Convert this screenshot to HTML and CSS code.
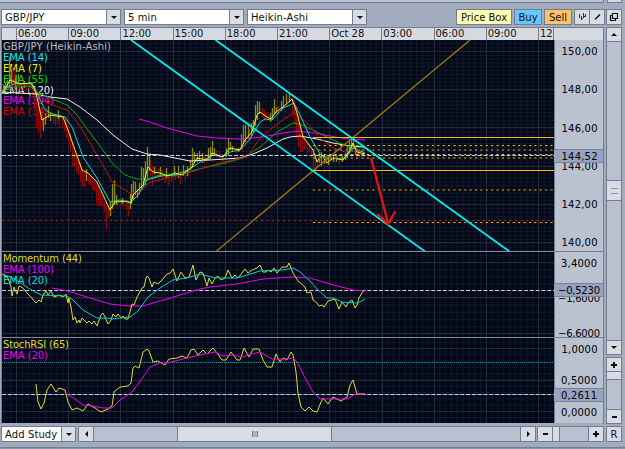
FILE: index.html
```
<!DOCTYPE html>
<html lang="en">
<head>
    <meta charset="UTF-8">
    <title>GBP/JPY</title>
    <link rel="stylesheet" href="styles.css">
</head>
<body>
    <div class="top-edge"><div class="edge-main"></div><div class="edge-side"></div></div>

    <div class="toolbar">
        <div class="select"><span>GBP/JPY</span><i class="drop"></i></div>
        <div class="select"><span>5 min</span><i class="drop"></i></div>
        <div class="select"><span>Heikin-Ashi</span><i class="drop"></i></div>
        <div class="actions">
            <div class="btn price">Price Box</div>
            <div class="btn buy">Buy</div>
            <div class="btn sell">Sell</div>
            <div class="tools">
                <div class="btn tool">
                    <svg width="13" height="14" viewBox="0 0 13 14"><path d="M3.5 4v4M5.5 6v4M7.5 3v5M9.5 4v3M3 5.5h1M5 8.5h2M7 6.5h2" stroke="#333" fill="none"/></svg>
                </div>
                <div class="btn tool">
                    <svg width="13" height="14" viewBox="0 0 13 14"><path d="M4 9.5l5-5" stroke="#111" stroke-width="1.4"/></svg>
                </div>
            </div>
            <div class="btn window">
                <svg width="14" height="14" viewBox="0 0 14 14"><path d="M5.5 3.5h5v5h-5zM5 5.5H3.500v5h5V9" stroke="#111" fill="none" stroke-width="1.2"/></svg>
            </div>
        </div>
    </div>

    <div class="main">
        <div class="chart">
            <div class="timeline">
                <span class="first"></span>
                <span>06:00</span><span>09:00</span><span>12:00</span><span>15:00</span><span>18:00</span>
                <span>21:00</span><span>Oct 28</span><span>03:00</span><span>06:00</span><span>09:00</span>
                <span class="last">12</span>
                <span class="corner"></span>
            </div>
            <div class="plots">
                <svg class="plot" width="552" height="383" viewBox="2 40 552 383">
                    <defs>
                        <pattern id="minorV" x="16" width="5.8" height="400" patternUnits="userSpaceOnUse"><path class="minor" d="M.5 0V400"/></pattern>
                        <pattern id="minorA" y="51" width="600" height="3.83" patternUnits="userSpaceOnUse"><path class="minor" d="M0 .5H600"/></pattern>
                        <pattern id="minorB" y="262" width="600" height="7.1" patternUnits="userSpaceOnUse"><path class="minor" d="M0 .5H600"/></pattern>
                        <pattern id="minorC" y="348" width="600" height="6.3" patternUnits="userSpaceOnUse"><path class="minor" d="M0 .5H600"/></pattern>
                        <clipPath id="price"><path d="M2 40H554V251H2z"/></clipPath>
                    </defs>

                    <!-- grid -->
                    <path fill="url(#minorA)" d="M2 40H554V251H2z"/>
                    <path fill="url(#minorB)" d="M2 252H554V337H2z"/>
                    <path fill="url(#minorC)" d="M2 338H554V423H2z"/>
                    <path fill="url(#minorV)" d="M2 40H554V423H2z"/>
                    <path class="major" d="M16.500 40V423M68.500 40V423M120.500 40V423M173.500 40V423M225.500 40V423M277.500 40V423M329.500 40V423M382.500 40V423M434.500 40V423M486.500 40V423M538.500 40V423"/>
                    <path class="major" d="M2 51.500H554M2 89.500H554M2 127.500H554M2 166.500H554M2 204.500H554M2 242.500H554M2 262.500H554M2 297.500H554M2 333.500H554M2 348.500H554M2 380.500H554M2 411.500H554"/>
                    <path class="divider" d="M2 251.500H554M2 337.500H554"/>

                    <!-- labels -->
                    <g class="labels">
                        <text x="3" y="50" textLength="108" fill="#b9bcc2">GBP/JPY (Heikin-Ashi)</text>
                        <text x="3" y="60.500" textLength="45" fill="#0ee">EMA (14)</text>
                        <text x="3" y="71.500" textLength="39" fill="#ee0">EMA (7)</text>
                        <text x="3" y="82.500" textLength="45" fill="#0d0">EMA (55)</text>
                        <text x="3" y="93.500" textLength="51" fill="#eee">EMA (120)</text>
                        <text x="3" y="104" textLength="51" fill="#e0e">EMA (204)</text>
                        <text x="3" y="115" textLength="45" fill="#d00">EMA (34)</text>
                        <text x="3" y="262" textLength="79" fill="#dd2">Momentum (44)</text>
                        <text x="3" y="273" textLength="51" fill="#e0e">EMA (100)</text>
                        <text x="3" y="283.500" textLength="45" fill="#0dd">EMA (20)</text>
                        <text x="3" y="348" textLength="66" fill="#dd2">StochRSI (65)</text>
                        <text x="3" y="358.500" textLength="45" fill="#e0e">EMA (20)</text>
                    </g>

                    <!-- price -->
                    <g clip-path="url(#price)" fill="none">
                        <path class="down" d="M12.500 66V85M14.500 72V92M17.500 84V93M20.500 85V94M23.500 86V91M26.500 85V92M29.500 84V92M32.500 85V95M34.500 88V107M36.500 94V128M38.500 100V133M40.500 108V138M42.500 114V129M46.500 112V121M53.500 113V124M55.500 116V126M57.500 116V124M59.500 117V127M62.500 116V127M64.500 117V131M66.500 120V138M68.500 126V143M70.500 133V152M72.500 142V167M74.500 151V166M76.500 153V172M78.500 159V175M80.500 162V182M82.500 169V187M84.500 172V187M88.500 174V184M90.500 176V185M92.500 177V190M94.500 180V191M96.500 183V205M98.500 186V206M100.500 192V206M102.500 196V207M104.500 201V212M106.500 205V230M108.500 208V218M117.500 199V207M120.500 200V206M123.500 199V207M126.500 202V210M128.500 204V216M150.500 160V176M152.500 166V186M155.500 168V179M158.500 168V180M162.500 170V180M165.500 172V183M168.500 173V185M171.500 171V182M175.500 171V180M180.500 170V184M185.500 169V180M188.500 168V177M204.500 156V164M216.500 150V157M219.500 151V160M222.500 154V162M236.500 148V154M242.500 144V152M249.500 130V140M262.500 108V117M264.500 110V121M266.500 112V121M268.500 115V120M278.500 106V115M286.500 98V107M292.500 94V116M294.500 100V125M296.500 107V139M298.500 118V147M300.500 125V152M302.500 133V152M304.500 137V150M307.500 140V153M309.500 144V153M311.500 146V158M313.500 150V169M315.500 153V170M317.500 158V168M326.500 155V164M331.500 155V161M339.500 158V165M356.500 148V159M359.500 149V158M361.500 153V158M363.500 149V158"/>
                        <path class="up" d="M3.500 84V94M5.500 82V92M7.500 80V88M9.500 57V88M11.500 70V84M15.500 78V88M18.500 74V84M24.500 81V88M43.500 118V131M45.500 113V125M48.500 106V118M50.500 113V121M58.500 110V119M86.500 169V181M110.500 202V216M112.500 184V209M114.500 180V205M116.500 195V205M122.500 198V204M130.500 194V209M131.500 184V204M133.500 181V200M135.500 182V195M137.500 189V198M139.500 183V194M141.500 167V190M143.500 168V187M145.500 161V185M147.500 147V178M149.500 154V171M154.500 167V174M160.500 167V177M166.500 168V178M174.500 166V176M178.500 166V178M183.500 165V176M187.500 166V176M190.500 160V170M192.500 148V167M194.500 152V163M197.500 153V162M199.500 151V160M202.500 153V163M208.500 148V160M210.500 147V160M212.500 141V156M214.500 148V156M226.500 148V157M228.500 139V155M230.500 142V150M232.500 146V151M238.500 148V152M241.500 134V149M243.500 125V144M245.500 125V142M248.500 125V138M251.500 123V136M253.500 120V132M255.500 105V126M257.500 101V120M259.500 102V114M270.500 113V122M272.500 108V119M274.500 99V114M276.500 107V113M281.500 101V111M283.500 96V108M286.500 94V103M289.500 93V102M319.500 155V163M321.500 152V166M324.500 154V164M328.500 156V165M333.500 155V162M336.500 156V162M342.500 156V162M345.500 153V160M347.500 146V158M349.500 141V154M351.500 139V151M353.500 138V149M355.500 146V155M358.500 150V156"/>
                        <path stroke="#eee" d="M2 92L35 94 50 97 67 99 80 107 97 120 113 135 132 149 147 154 160 155 170 157 190 161 210 160 240 158 253 154 267 148 283 139 290 137 300 136 317 139 333 143 350 146 365 147"/>
                        <path stroke="#0a0" d="M2 91L15 87 30 86 37 92 50 98 67 105 77 115 87 129 100 146 112 163 125 175 137 179 147 179 160 175 180 174 195 170 208 167 225 163 243 158 260 147 277 132 293 123 300 124 313 130 333 140 347 146 365 148"/>
                        <path stroke="#c01010" d="M2 90L15 85 30 85 37 92 47 103 67 110 80 126 97 155 112 182 130 193 140 192 150 182 160 180 175 176 195 171 203 168 223 162 247 157 260 138 273 127 293 113 297 115 307 123 320 138 333 148 345 152 365 151"/>
                        <path stroke="#e0e" d="M139 119L150 122 167 128 197 136 217 138 240 139 263 137 283 133 297 131 315 133 335 137 350 139 365 140"/>
                        <path stroke="#0dd" d="M2 91L13 84 32 83 38 95 45 110 53 114 65 117 72 127 78 143 83 157 97 178 110 202 120 200 130 203 138 195 147 180 160 176 175 175 190 169 200 162 213 155 222 157 230 152 240 150 250 139 260 122 265 119 272 120 283 108 294 103 300 115 310 137 320 154 330 159 345 158 353 148 365 153"/>
                        <path stroke="#ee2" d="M2 94L10 80 20 84 31 83 36 93 42 120 50 115 63 117 68 130 75 150 82 170 88 173 97 182 110 210 115 202 127 201 131 203 133 195 143 185 148 167 153 172 160 173 168 176 175 173 182 175 192 167 197 158 207 160 212 153 223 157 230 148 240 150 245 140 252 132 257 115 260 112 267 117 271 119 276 112 283 107 292 99 297 113 303 137 313 150 317 162 322 155 327 163 333 158 343 160 350 150 353 143 357 152 365 154"/>
                        <path stroke="#a47a12" stroke-width="1.2" d="M216 251.500L470 40"/>
                        <path stroke="#fb0" d="M313 137.500H554M313 170.500H554"/>
                        <path class="dots dim" d="M313 150H554M313 158H554M313 190H554"/>
                        <path class="dots" stroke="#fc0" d="M313 145.500H554M313 154.500H554M313 222.500H554"/>
                        <path class="dots" stroke="#e01010" d="M2 220.500H554"/>
                        <path class="dash" d="M2 155.500H554"/>
                        <path class="channel" d="M131 40L425 251.500M215.500 40L509.500 251.500"/>
                        <path stroke="#f01010" stroke-width="2.2" d="M371 158L388 223M377.500 214L388 224 395.500 211"/>
                    </g>

                    <!-- momentum -->
                    <g fill="none">
                        <path class="dash" d="M2 290.500H554"/>
                        <path stroke="#e0e" d="M52 288L68 291 90 298 110 304 130 306 143 306 167 299 200 289 210 287 237 284 263 279 293 277 310 278 330 284 353 290 365 291"/>
                        <path stroke="#dd2" d="M2 274L8 278 11 287 12 296 14 287 17 294 19 286 23 288 27 293 31 297 36 303 39 300 41 302 43 295 46 291 48 295 51 291 54 297 59 295 63 297 66 294 68 303 69 298 71 307 73 320 75 317 77 323 79 320 80 323 82 318 87 323 89 321 92 324 94 321 97 326 101 315 103 313 105 317 108 324 111 320 113 314 116 317 118 314 121 318 123 316 125 319 128 319 131 308 132 304 134 305 137 297 142 288 144 287 146 278 147 276 149 278 152 287 154 282 158 284 162 280 167 274 170 273 173 269 177 281 181 272 185 278 189 277 193 265 196 280 200 272 203 273 207 286 209 278 212 284 215 278 218 276 221 280 225 278 228 270 232 278 235 275 238 278 242 273 245 269 248 273 252 270 257 268 260 265 263 272 266 272 268 270 271 272 274 268 277 273 282 267 287 267 289 263 293 273 298 281 305 287 307 293 311 292 313 300 317 303 319 306 322 305 324 307 328 301 335 299 339 309 342 302 346 307 348 303 352 300 355 308 357 305 359 298 362 293 364 290"/>
                        <path stroke="#0cc" d="M3 274L15 279 28 288 41 295 67 296 73 300 83 310 97 318 107 318 112 319 130 317 138 311 148 297 160 288 173 280 187 278 200 274 215 278 237 278 260 271 283 270 293 268 300 272 310 281 318 290 327 298 333 298 342 302 358 303 365 299"/>
                    </g>

                    <!-- stochastic rsi -->
                    <g fill="none">
                        <path stroke="#0a9898" stroke-dasharray="1 1" d="M2 362.500H554"/>
                        <path stroke="#067" d="M2 394.500H554"/>
                        <path class="dash" d="M2 394.500H554"/>
                        <path stroke="#dd2" d="M36 384L38 402 41 409 44 403 47 390 51 384 56 392 59 388 65 390 68 402 72 410 77 408 83 411 88 404 95 408 101 412 108 409 112 406 114 392 120 387 128 386 131 383 133 368 135 366 139 368 143 352 147 349 149 351 153 362 158 361 165 365 169 359 177 358 182 356 187 358 191 350 194 349 198 355 203 350 207 354 213 348 217 353 222 360 226 360 231 352 237 360 240 360 244 348 249 357 253 349 259 349 263 360 267 367 272 367 276 354 280 362 283 358 287 360 291 352 293 355 296 372 298 393 301 407 305 411 309 407 313 411 317 412 321 402 323 398 328 404 333 397 341 401 347 397 350 385 353 380 357 394 365 394"/>
                        <path stroke="#e0e" d="M65 393L72 397 83 405 93 406 103 408 112 408 120 400 132 392 138 384 150 367 160 363 167 363 183 359 200 355 215 352 223 356 232 355 242 357 248 355 260 352 272 359 287 359 293 358 297 362 305 378 313 392 320 399 347 399 355 394 365 394"/>
                    </g>
                </svg>
                <svg class="axis" width="49" height="383" viewBox="554 40 49 383">
                    <path stroke="#727d92" d="M554.500 40V423"/>
                    <text x="561.500" y="55" textLength="36">150,00</text>
                    <text x="561.500" y="93" textLength="36">148,00</text>
                    <text x="561.500" y="131.500" textLength="36">146,00</text>
                    <text x="561.500" y="170" textLength="36">144,00</text>
                    <text x="561.500" y="208" textLength="36">142,00</text>
                    <text x="561.500" y="246" textLength="36">140,00</text>
                    <text x="561" y="267" textLength="36">3,4000</text>
                    <text x="558" y="302" textLength="42">−1,6000</text>
                    <text x="558" y="337" textLength="42">−6,6000</text>
                    <text x="561.500" y="352.500" textLength="36">1,0000</text>
                    <text x="561" y="384" textLength="36">0,5000</text>
                    <text x="561" y="415.500" textLength="36">0,0000</text>
                    <path stroke="#727d92" d="M554 251.500H603M554 337.500H603"/>
                    <g class="current">
                        <rect x="553.500" y="149.500" width="50" height="13"/>
                        <rect x="553.500" y="283.500" width="50" height="13"/>
                        <rect x="553.500" y="388.500" width="50" height="13"/>
                    </g>
                    <text x="561.500" y="160" textLength="36">144,52</text>
                    <text x="558" y="294" textLength="42">−0,5230</text>
                    <text x="561" y="399" textLength="36">0,2611</text>
                </svg>
            </div>
        </div>

        <div class="side">
            <div class="scroll-v">
                <div class="btn"><i class="tri up-tri"></i></div>
                <div class="track"><div class="thumb-v"></div></div>
                <div class="btn"><i class="tri down-tri"></i></div>
            </div>
            <div class="zoom-v">
                <div class="btn plus"></div>
                <div class="knob-v"></div>
                <div class="track"></div>
                <div class="btn minus"></div>
            </div>
        </div>
    </div>

    <div class="bottom">
        <div class="select study"><span>Add Study</span><i class="drop"></i></div>
        <div class="scroll-h">
            <div class="btn"><i class="tri left-tri"></i></div>
            <div class="track"><div class="thumb-h"></div></div>
            <div class="btn"><i class="tri right-tri"></i></div>
        </div>
        <div class="zoom-h">
            <div class="btn minus"></div>
            <div class="knob-h"></div>
            <div class="track"></div>
            <div class="btn plus"></div>
        </div>
        <div class="btn reset">R</div>
    </div>
    <div class="bottom-edge"></div>
</body>
</html>
```

FILE: styles.css
```
* {
    box-sizing: border-box;
}
body {
    margin: 0;
    width: 625px;
    height: 449px;
    overflow: hidden;
    display: flex;
    flex-direction: column;
    background-color: #a1abbd;
    font-family: "DejaVu Sans", sans-serif;
    font-size: 10px;
    color: #111;
}
.top-edge {
    display: flex;
    gap: 3px;
    height: 3px;
    margin-bottom: 6px;
}
.edge-main {
    width: 604px;
    background: #b9c0ce;
    border-bottom: 1px solid #727d92;
    border-right: 1px solid #727d92;
}
.edge-side {
    width: 15px;
    background: #d6d9e0;
    border: 1px solid #727d92;
    border-top: none;
}

/* toolbar */
.toolbar {
    display: flex;
    gap: 3px;
    height: 16px;
    padding: 0 3px 0 1px;
    margin-bottom: 2px;
}
.select {
    display: flex;
    width: 120px;
    height: 16px;
    background: #fff;
    border: 1px solid #727d92;
    line-height: 15px;
    letter-spacing: 0.1px;
}
.select span {
    flex: 1;
    padding-left: 3px;
    white-space: nowrap;
}
.drop {
    width: 14px;
    background: #d9dce3;
    border-left: 1px solid #727d92;
    display: flex;
    align-items: center;
    justify-content: center;
}
.drop::before {
    content: "";
    border: 3px solid transparent;
    border-top: 3px solid #111;
    border-bottom: none;
}
.actions {
    display: flex;
    gap: 2px;
    margin-left: auto;
}
.btn {
    display: flex;
    align-items: center;
    justify-content: center;
    flex: none;
    background: #d9dce3;
    border: 1px solid #727d92;
}
.price {
    width: 56px;
    background: #ffffb0;
}
.buy {
    width: 28px;
    background: #66c8ff;
}
.sell {
    width: 28px;
    background: #ffc266;
}
.tools {
    display: flex;
    width: 30px;
}
.tool {
    width: 16px;
}
.tool + .tool {
    margin-left: -1px;
}
.window {
    width: 16px;
}

/* chart */
.main {
    display: flex;
    gap: 2px;
    height: 397px;
    margin-bottom: 2px;
    padding-left: 1px;
}
.chart {
    width: 603px;
    border: 1px solid #727d92;
    border-bottom: none;
}
.timeline {
    display: flex;
    height: 12px;
    background: #d6d9e0;
    line-height: 12px;
}
.timeline span {
    width: 52.2px;
    flex: none;
    padding-left: 1px;
    border-left: 1px solid #727d92;
    overflow: hidden;
}
.timeline .first {
    width: 14px;
    border-left: none;
}
.timeline .last {
    width: 15.500px;
}
.timeline .corner {
    flex: 1;
}
.plots {
    display: flex;
    border-top: 1px solid #727d92;
}
.plot,
.axis {
    flex: none;
    margin-top: -1px;
}
.plot {
    background: #020818;
}
.axis {
    background: #bac1cf;
}
.labels text,
.axis text {
    font-size: 10px;
}
.minor {
    stroke: #101827;
}
.major {
    stroke: #242c39;
}
.divider {
    stroke: #868995;
}
.down {
    stroke: #8a0808;
    stroke-width: 1.3;
}
.up {
    stroke: #8c8a0a;
    stroke-width: 1.3;
}
.dots {
    stroke-dasharray: 2 3.4;
}
.dim {
    stroke: #80640f;
    stroke-width: 2;
}
.dash {
    stroke: #c8ccd8;
    stroke-dasharray: 4 1.800;
}
.channel {
    stroke: #0ee;
    stroke-width: 1.8;
}
.current rect {
    fill: #98a4bf;
    stroke: #77829b;
}

/* scrollbars */
.side {
    width: 16px;
    display: flex;
    flex-direction: column;
    gap: 2px;
}
.scroll-v,
.zoom-v {
    display: flex;
    flex-direction: column;
}
.scroll-v {
    height: 328px;
}
.zoom-v {
    height: 67px;
}
.side .btn {
    height: 15px;
}
.track {
    flex: 1;
    background: #b9c0ce;
    border: 1px solid #727d92;
}
.side .track {
    border-top: none;
    border-bottom: none;
}
.thumb-v {
    height: 21px;
    margin: 138px -1px 0;
    background: #d9dce3;
    border: 1px solid #727d92;
    display: flex;
    align-items: center;
    justify-content: center;
}
.thumb-v::before {
    content: "";
    width: 7px;
    height: 4px;
    border: 1px solid #8a94a6;
    border-left: none;
    border-right: none;
}
.knob-v {
    height: 8px;
    background: #d9dce3;
    border: 1px solid #727d92;
    border-top: none;
}
.tri {
    border: 3px solid transparent;
}
.up-tri {
    border-bottom-color: #111;
    border-top: none;
}
.down-tri {
    border-top-color: #111;
    border-bottom: none;
}
.left-tri {
    border-right-color: #111;
    border-left: none;
}
.right-tri {
    border-left-color: #111;
    border-right: none;
}
.plus::before {
    content: "";
    width: 6px;
    height: 6px;
    background:
        linear-gradient(#111, #111) center / 6px 2px no-repeat,
        linear-gradient(#111, #111) center / 2px 6px no-repeat;
}
.minus::before {
    content: "";
    width: 5px;
    height: 2px;
    background: #111;
}

/* bottom row */
.bottom {
    display: flex;
    height: 16px;
    padding-left: 1px;
}
.study {
    width: 75px;
    margin-right: 2px;
}
.scroll-h,
.zoom-h {
    display: flex;
}
.scroll-h {
    width: 458px;
    margin-right: 1px;
}
.zoom-h {
    width: 67px;
    margin-right: 2px;
}
.bottom .btn {
    width: 16px;
}
.bottom .track {
    border-left: none;
    border-right: none;
}
.thumb-h {
    width: 155px;
    height: 16px;
    margin: -1px 0 0 83px;
    background: #d9dce3;
    border: 1px solid #727d92;
    display: flex;
    align-items: center;
    justify-content: center;
}
.thumb-h::before {
    content: "";
    width: 4px;
    height: 6px;
    background: #a9b1bf;
    border: 1px solid #7c879a;
    border-top: none;
    border-bottom: none;
}
.knob-h {
    width: 7px;
    background: #d9dce3;
    border: 1px solid #727d92;
    border-left: none;
}
.bottom-edge {
    height: 2px;
    margin-top: 5px;
    background: #8b96aa;
    border-top: 1px solid #727d92;
}
```
